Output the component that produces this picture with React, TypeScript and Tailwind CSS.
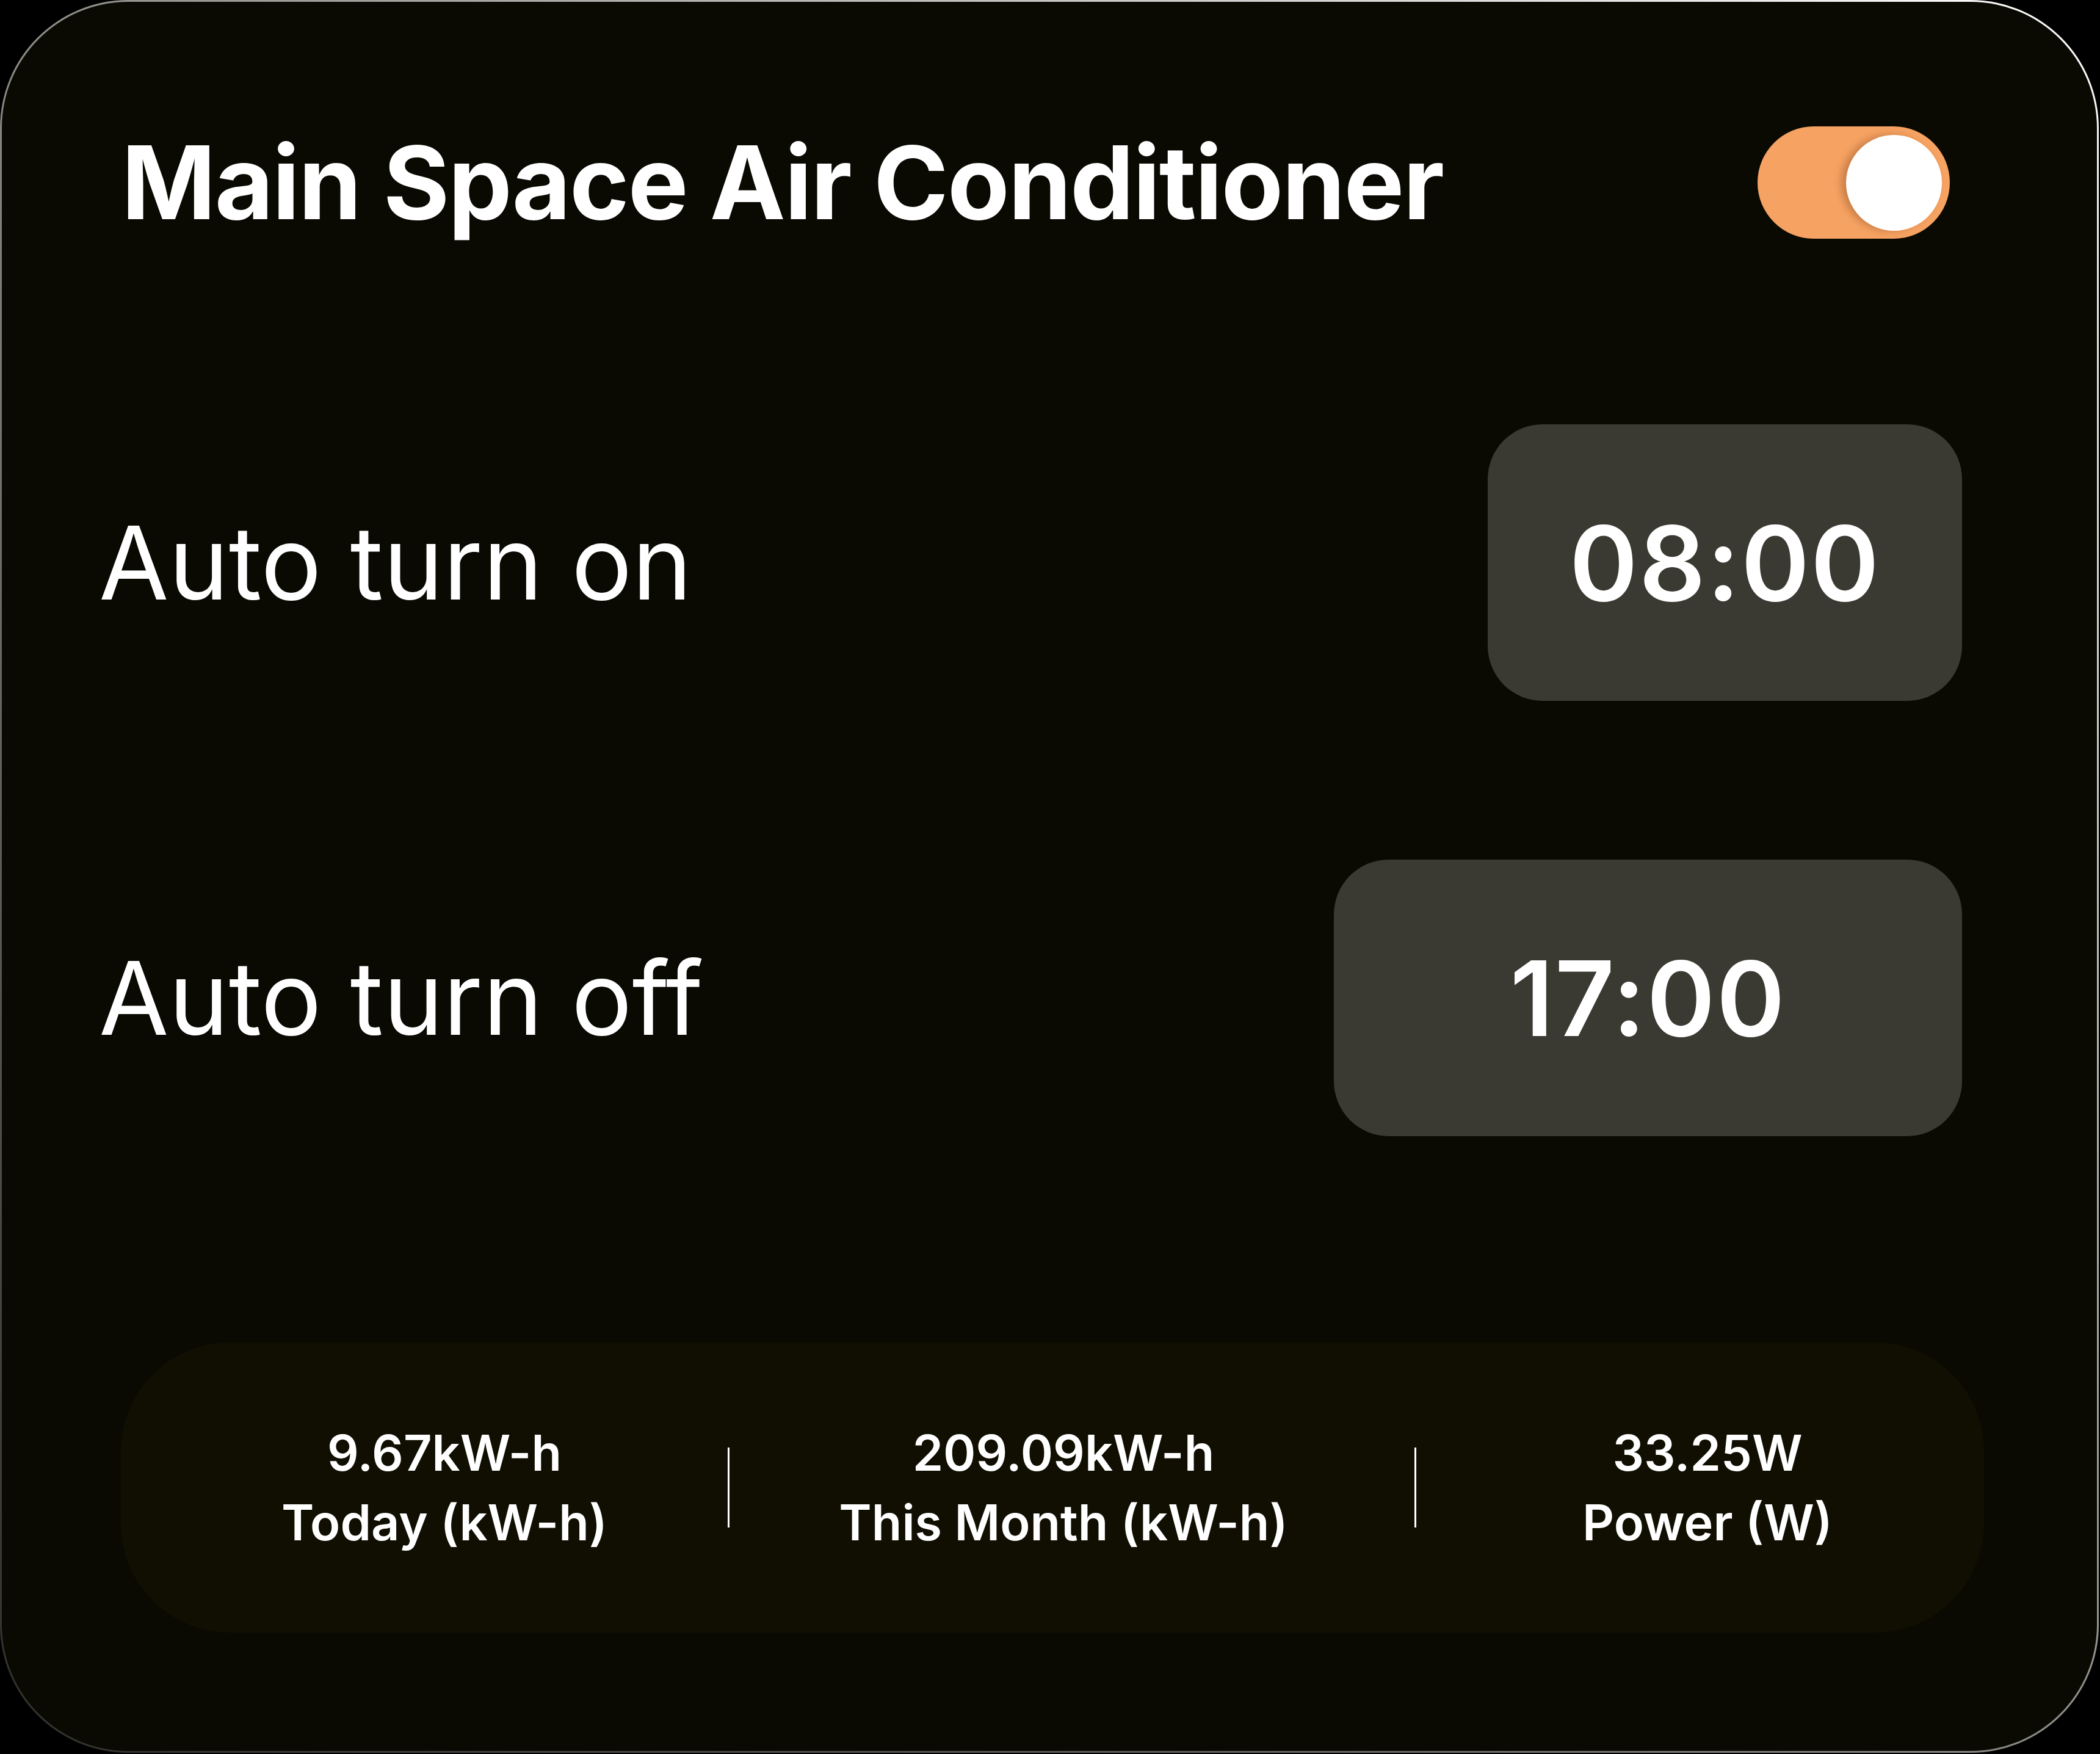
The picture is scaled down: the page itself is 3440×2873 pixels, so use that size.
import React from "react";

const font = { fontFamily: "Inter, 'Noto Sans', sans-serif" };

function Toggle() {
  return (
    <div className="flex h-[184px] w-[315px] items-center justify-end rounded-full bg-[#f5a262] pr-[13px]">
      <div className="h-[157px] w-[157px] rounded-full bg-white shadow-[-8px_0_12px_rgba(120,60,20,0.35)]" />
    </div>
  );
}

function ScheduleRow({ label, time, boxWidth }: { label: string; time: string; boxWidth: string }) {
  return (
    <div className="flex items-center justify-between pl-[159px] pr-[221px]">
      <span className="text-[166px] font-normal leading-none tracking-[0px] text-white">{label}</span>
      <div
        className={`flex h-[453px] items-center justify-center rounded-[90px] bg-[#3a3a32] ${boxWidth}`}
      >
        <span className="text-[170px] font-semibold leading-none tracking-[2px] text-white">{time}</span>
      </div>
    </div>
  );
}

function Stat({ value, label, width, offset }: { value: string; label: string; width: string; offset: string }) {
  return (
    <div className={`flex flex-col items-center text-[81px] font-semibold leading-[114px] text-white ${width} ${offset}`}>
      <span>{value}</span>
      <span>{label}</span>
    </div>
  );
}

export default function App() {
  return (
    <div className="min-h-screen bg-black" style={font}>
      <div className="w-[3438px] h-[2871px] rounded-[210px] bg-linear-to-bl from-white via-[#8d8d88] to-[#2e2e2a] p-[3px]">
        <div className="flex h-full w-full flex-col rounded-[207px] bg-[#0a0a03]">
          {/* HEADER */}
          <div className="mt-[204px] flex h-[184px] items-center justify-between pl-[196px] pr-[241px]">
            <h1 className="text-[166px] font-bold leading-none tracking-[-2px] text-white">
              Main Space Air Conditioner
            </h1>
            <Toggle />
          </div>

          {/* SCHEDULE */}
          <div className="mt-[304px]">
            <ScheduleRow label="Auto turn on" time="08:00" boxWidth="w-[777px]" />
          </div>
          <div className="mt-[260px]">
            <ScheduleRow label="Auto turn off" time="17:00" boxWidth="w-[1029px]" />
          </div>

          {/* STATS */}
          <div className="ml-[195px] mt-[338px] flex h-[475px] w-[3052px] items-center rounded-[178px] bg-[#110f02]">
            <Stat value="9.67kW-h" label="Today (kW-h)" width="w-[560px]" offset="ml-[250px]" />
            <div className="ml-[184px] h-[131px] w-[3px] bg-white" />
            <Stat value="209.09kW-h" label="This Month (kW-h)" width="w-[780px]" offset="ml-[157px]" />
            <div className="ml-[185px] h-[131px] w-[3px] bg-white" />
            <Stat value="33.25W" label="Power (W)" width="w-[460px]" offset="ml-[247px]" />
          </div>
        </div>
      </div>
    </div>
  );
}
